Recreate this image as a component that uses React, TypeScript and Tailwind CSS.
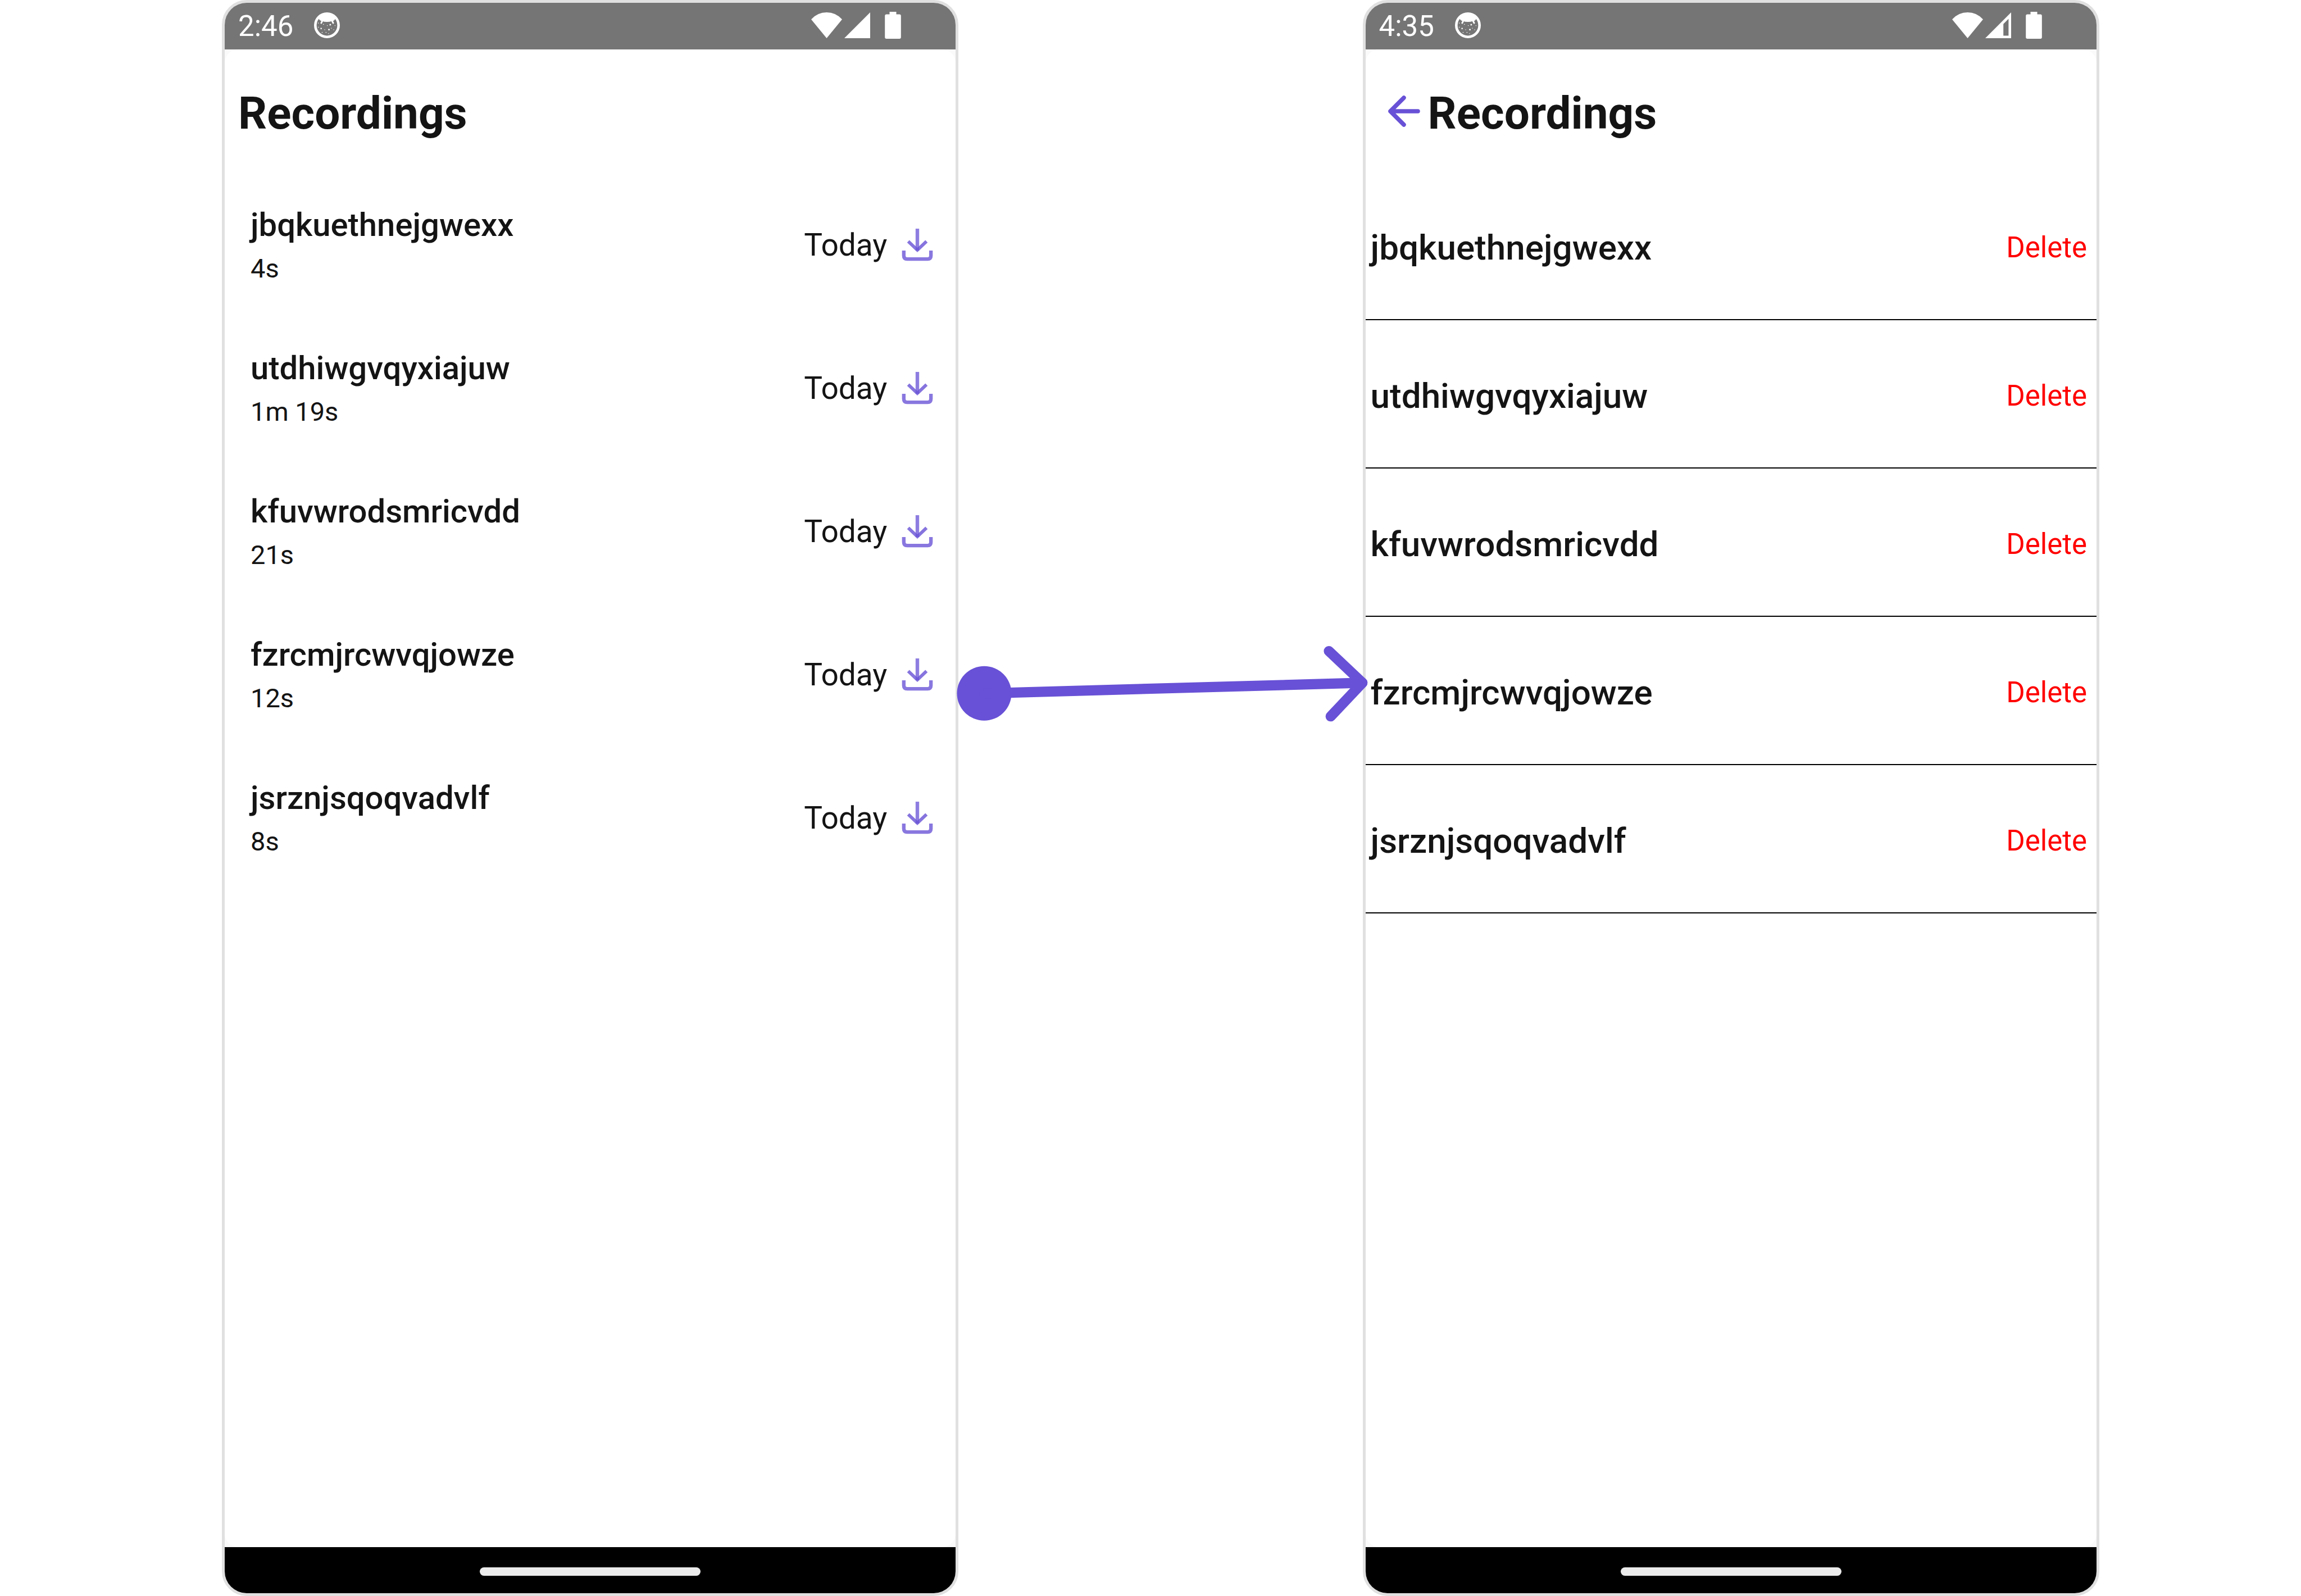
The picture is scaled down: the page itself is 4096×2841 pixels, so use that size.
import React from "react";

type Recording = { name: string; duration: string; day: string };

const recordings: Recording[] = [
  { name: "jbqkuethnejgwexx", duration: "4s", day: "Today" },
  { name: "utdhiwgvqyxiajuw", duration: "1m 19s", day: "Today" },
  { name: "kfuvwrodsmricvdd", duration: "21s", day: "Today" },
  { name: "fzrcmjrcwvqjowze", duration: "12s", day: "Today" },
  { name: "jsrznjsqoqvadvlf", duration: "8s", day: "Today" },
];

function DebugIcon() {
  return (
    <svg viewBox="0 0 50 50" className="size-[46px]" fill="none" aria-hidden="true">
      <circle cx="25" cy="25" r="22.5" stroke="white" strokeWidth="5" />
      <path d="M5 15 A23 23 0 0 1 45 15 L41.5 12 Q39 17 35.5 16.5 Q30 18.5 25 18.5 Q19 18.5 15.5 16.5 Q12 17 8.500 12 Z" fill="white" />
      <path d="M16.500 15.500 L14 20.500 M34.500 15.500 L37 20.500" stroke="white" strokeWidth="3.200" strokeLinecap="round" />
      <g fill="white">
        <rect x="12.500" y="30" width="2.500" height="2.500" />
        <rect x="30" y="22.500" width="2.800" height="2.800" />
        <rect x="27.500" y="32" width="2.800" height="2.800" />
        <rect x="7.500" y="20" width="1.500" height="1.500" />
        <rect x="7.500" y="28" width="1.500" height="1.500" />
        <rect x="17.500" y="22.500" width="1.500" height="1.500" />
        <rect x="25" y="25" width="1.300" height="1.300" />
        <rect x="40" y="25" width="1.300" height="1.300" />
        <rect x="33" y="30" width="1.300" height="1.300" />
        <rect x="20" y="33" width="1.300" height="1.300" />
        <rect x="37.500" y="33" width="1.300" height="1.300" />
        <rect x="15" y="38" width="1.500" height="1.500" />
        <rect x="22.500" y="38" width="1.500" height="1.500" />
        <rect x="27.500" y="40.500" width="1.300" height="1.300" />
      </g>
    </svg>
  );
}

function WifiIcon() {
  return (
    <svg viewBox="0 0 60 50" className="h-[46px] w-[55px]" aria-hidden="true">
      <path d="M30 50 L0 13.500 Q12.500 0 30 0 T60 13.500 Z" fill="white" />
    </svg>
  );
}

function SignalIcon({ weak }: { weak: boolean }) {
  return (
    <svg viewBox="0 0 50 50" className="size-[46px]" aria-hidden="true">
      <path
        d={weak ? "M0 50 H50 V0 Z M35 45 V22.500 L45 12.500 V45 Z" : "M0 50 H50 V0 Z"}
        fillRule="evenodd"
        fill="white"
      />
    </svg>
  );
}

function BatteryIcon() {
  return (
    <svg viewBox="0 0 31 52" className="h-[48px] w-[29px]" aria-hidden="true">
      <path d="M9 0 H22 V5 H28 Q31 5 31 8 V49 Q31 52 28 52 H3 Q0 52 0 49 V8 Q0 5 3 5 H9 Z" fill="white" />
    </svg>
  );
}

function DownloadIcon() {
  return (
    <svg viewBox="0 0 84 84" className="size-[76px]" fill="none" stroke="#6851d6" aria-hidden="true">
      <path d="M42 10 V53" strokeWidth="7" strokeOpacity="0.75" />
      <path d="M24 35 L42 52 L60 35" strokeWidth="6.500" strokeOpacity="0.8" />
      <path d="M15.300 53 V63 Q15.300 69.800 22 69.800 H62 Q68.700 69.800 68.700 63 V53" strokeWidth="7" strokeOpacity="0.78" />
    </svg>
  );
}

function BackIcon() {
  return (
    <svg
      viewBox="0 0 76 76"
      className="size-[76px]"
      fill="none"
      stroke="#6851d6"
      strokeWidth="7.500"
      strokeLinecap="round"
      strokeLinejoin="round"
      aria-hidden="true"
    >
      <path d="M37 10 L13 34 L37 58 M13 34 H62" />
    </svg>
  );
}

function Connector() {
  return (
    <div className="z-10 mt-[1149px]">
      <svg
        viewBox="1874 1262 790 150"
        className="block w-full overflow-visible"
        fill="none"
        stroke="#6851d6"
        strokeWidth="20"
        strokeLinecap="round"
        strokeLinejoin="round"
        aria-hidden="true"
      >
        <circle cx="1924.500" cy="1355.700" r="53.300" fill="#6851d6" stroke="none" />
        <path d="M1924.500 1355.700 L2664 1335" />
        <path d="M2598.500 1273 L2664 1335 L2602 1400.700" />
      </svg>
    </div>
  );
}

function Phone({
  time,
  weakSignal = false,
  children,
}: {
  time: string;
  weakSignal?: boolean;
  children: React.ReactNode;
}) {
  return (
    <section className="flex min-h-screen min-w-0 flex-col overflow-hidden rounded-[44px] border-[5px] border-[#e0e0e0] bg-[#fafafa]">
      <div className="flex h-[83px] items-center bg-[#757575] pr-[97px] pb-1 pl-6">
        <span className="pt-1 text-[51px] leading-[60px] text-white">{time}</span>
        <span className="ml-[37px]">
          <DebugIcon />
        </span>
        <div className="ml-auto flex items-center">
          <WifiIcon />
          <span className="ml-1">
            <SignalIcon weak={weakSignal} />
          </span>
          <span className="ml-[26px]">
            <BatteryIcon />
          </span>
        </div>
      </div>
      <main className="flex-1 rounded-3xl bg-white">{children}</main>
      <div className="flex h-[82px] items-center justify-center bg-black pt-1">
        <div className="h-[15px] w-[393px] rounded-full bg-[#ebebeb]" />
      </div>
    </section>
  );
}

export default function App() {
  return (
    <div className="grid min-h-screen grid-cols-[1311fr_719fr_1311fr] items-start bg-white pr-[359px] pl-[395px] font-[Roboto,sans-serif] text-[#141414]">
      <Phone time="2:46">
        <header className="px-6 pt-[66px] pb-[58px]">
          <h1 className="text-[80px] leading-[96px] font-bold">Recordings</h1>
        </header>
        <ul>
          {recordings.map((r) => (
            <li key={r.name} className="flex h-[255px] items-center justify-between pr-[30px] pl-[46px]">
              <div className="flex flex-col gap-4">
                <p className="text-[58px] leading-[68px] font-medium">{r.name}</p>
                <p className="text-[47px] leading-[56px]">{r.duration}</p>
              </div>
              <div className="flex items-center gap-4">
                <span className="text-[55px] leading-[64px]">{r.day}</span>
                <button type="button" aria-label={`Download ${r.name}`}>
                  <DownloadIcon />
                </button>
              </div>
            </li>
          ))}
        </ul>
      </Phone>

      <Connector />

      <Phone time="4:35" weakSignal>
        <header className="flex items-center gap-1 pt-[66px] pb-14 pl-[31px]">
          <button type="button" aria-label="Back">
            <BackIcon />
          </button>
          <h1 className="text-[80px] leading-[96px] font-bold">Recordings</h1>
        </header>
        <ul>
          {recordings.map((r) => (
            <li
              key={r.name}
              className="flex h-[264px] items-center justify-between border-b-2 border-black pt-2 pr-[17px] pl-[9px]"
            >
              <p className="text-[62px] leading-[72px] font-medium">{r.name}</p>
              <button type="button" className="text-[51px] leading-[60px] text-[#ff0000]">
                Delete
              </button>
            </li>
          ))}
        </ul>
      </Phone>
    </div>
  );
}
